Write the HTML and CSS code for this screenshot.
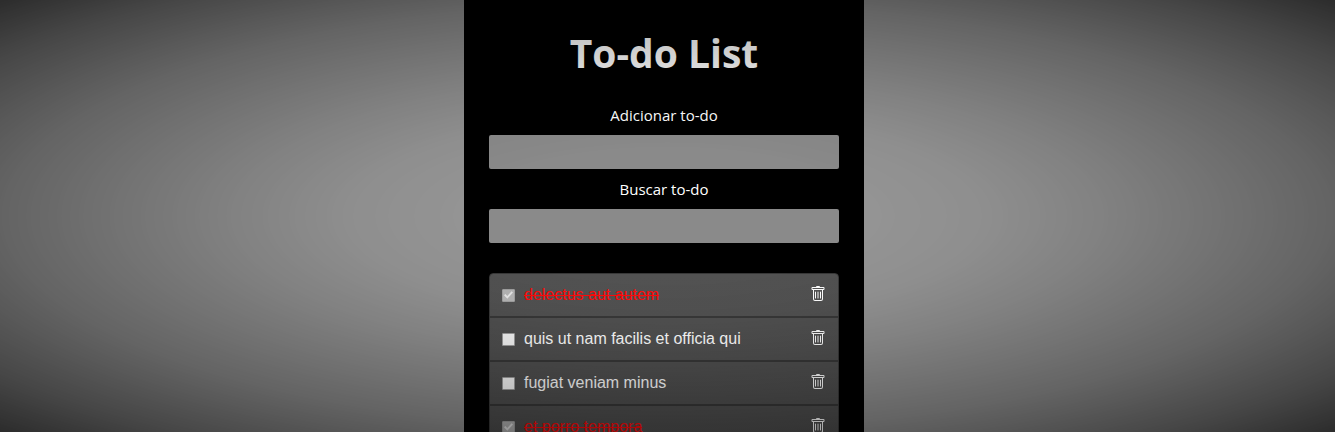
FILE: index.html
```html
<!DOCTYPE html>
<html lang="pt-BR">
<head>
<meta charset="utf-8">
<meta name="viewport" content="width=device-width, initial-scale=1">
<title>To-do List</title>
<link rel="stylesheet" href="styles.css">
</head>
<body>
<svg class="sprite" aria-hidden="true">
  <symbol id="trash" viewBox="0 0 16 16">
    <path d="M5.5 5.5A.5.5 0 0 1 6 6v6a.5.5 0 0 1-1 0V6a.5.5 0 0 1 .5-.5m2.5 0a.5.5 0 0 1 .5.5v6a.5.5 0 0 1-1 0V6a.5.5 0 0 1 .5-.5m3 .5a.5.5 0 0 0-1 0v6a.5.5 0 0 0 1 0z"/>
    <path d="M14.5 3a1 1 0 0 1-1 1H13v9a2 2 0 0 1-2 2H5a2 2 0 0 1-2-2V4h-.5a1 1 0 0 1-1-1V2a1 1 0 0 1 1-1H6a1 1 0 0 1 1-1h2a1 1 0 0 1 1 1h3.5a1 1 0 0 1 1 1zM4.118 4 4 4.059V13a1 1 0 0 0 1 1h6a1 1 0 0 0 1-1V4.059L11.882 4zM2.5 3h11V2h-11z"/>
  </symbol>
</svg>
<main class="panel">
  <h1 class="title">To-do List</h1>
  <form class="form">
    <label class="label" for="add">Adicionar to-do</label>
    <input class="field" id="add" type="text">
    <label class="label" for="search">Buscar to-do</label>
    <input class="field" id="search" type="text">
  </form>
  <ul class="list">
    <li class="item">
      <input class="check" id="t1" type="checkbox" checked>
      <label class="text" for="t1">delectus aut autem</label>
      <button class="remove" type="button" aria-label="Remover"><svg class="icon"><use href="#trash"/></svg></button>
    </li>
    <li class="item">
      <input class="check" id="t2" type="checkbox">
      <label class="text" for="t2">quis ut nam facilis et officia qui</label>
      <button class="remove" type="button" aria-label="Remover"><svg class="icon"><use href="#trash"/></svg></button>
    </li>
    <li class="item">
      <input class="check" id="t3" type="checkbox">
      <label class="text" for="t3">fugiat veniam minus</label>
      <button class="remove" type="button" aria-label="Remover"><svg class="icon"><use href="#trash"/></svg></button>
    </li>
    <li class="item">
      <input class="check" id="t4" type="checkbox" checked>
      <label class="text" for="t4">et porro tempora</label>
      <button class="remove" type="button" aria-label="Remover"><svg class="icon"><use href="#trash"/></svg></button>
    </li>
  </ul>
</main>
<div class="vignette"></div>
</body>
</html>
```
FILE: styles.css
```css
* {
  box-sizing: border-box;
}

body {
  margin: 0;
  padding-right: 7px;
  height: 100vh;
  overflow: hidden;
  background: #949494;
  color: #fff;
  font-family: "Segoe UI", "Open Sans", "Noto Sans", sans-serif;
  font-size: 16px;
  line-height: 24px;
}

.sprite {
  display: none;
}

.panel {
  max-width: 400px;
  min-height: 100vh;
  margin: 0 auto;
  padding: 29px 25px;
  background: #000;
}

.title {
  margin: 0 0 26px;
  font-size: 39px;
  line-height: 48px;
  font-weight: 700;
  text-align: center;
}

.form {
  display: flex;
  flex-direction: column;
  margin-bottom: 30px;
}

.label {
  margin-bottom: 8px;
  font-size: 15px;
  text-align: center;
}

.field {
  height: 34px;
  padding: 4px 8px;
  border: 0;
  border-radius: 2px;
  background: #8a8a8a;
  color: #fff;
  font: inherit;
}

.field + .label {
  margin-top: 8px;
}

.list {
  margin: 0;
  padding: 0;
  list-style: none;
  font-family: "Liberation Sans", Arial, sans-serif;
  border: 1px solid #383838;
  border-radius: 4px;
  background: linear-gradient(#525252, #4e4e4e);
  overflow: hidden;
}

.item {
  display: flex;
  align-items: center;
  height: 44px;
  padding: 0 12px;
  border-bottom: 2px solid #383838;
}

.check {
  position: relative;
  appearance: none;
  width: 13px;
  height: 13px;
  margin: 0 9px 0 0;
  border: 1px solid #a0a0a0;
  border-radius: 1px;
  background: #fafafa;
}

.check:checked {
  background: #b4b4b4;
}

.check:checked::after {
  content: "";
  position: absolute;
  inset: 1px;
  background: #e6e6e6;
  clip-path: polygon(0 52%, 15% 38%, 37% 61%, 84% 8%, 100% 22%, 37% 92%);
}

.text {
  flex: 1;
}

.check:checked + .text {
  color: #ff0a0a;
  text-decoration: line-through;
}

.remove {
  display: flex;
  padding: 0 0 2px;
  border: 0;
  background: none;
  color: #fff;
}

.icon {
  width: 16px;
  height: 16px;
  fill: currentColor;
}

.vignette {
  position: fixed;
  inset: 0;
  pointer-events: none;
  background: radial-gradient(ellipse at center, rgba(0, 0, 0, 0) 22%, rgba(0, 0, 0, 0.03) 33%, rgba(0, 0, 0, 0.12) 46%, rgba(0, 0, 0, 0.21) 57%, rgba(0, 0, 0, 0.32) 70%, rgba(0, 0, 0, 0.41) 78%, rgba(0, 0, 0, 0.53) 88%, rgba(0, 0, 0, 0.7) 100%);
}
```
